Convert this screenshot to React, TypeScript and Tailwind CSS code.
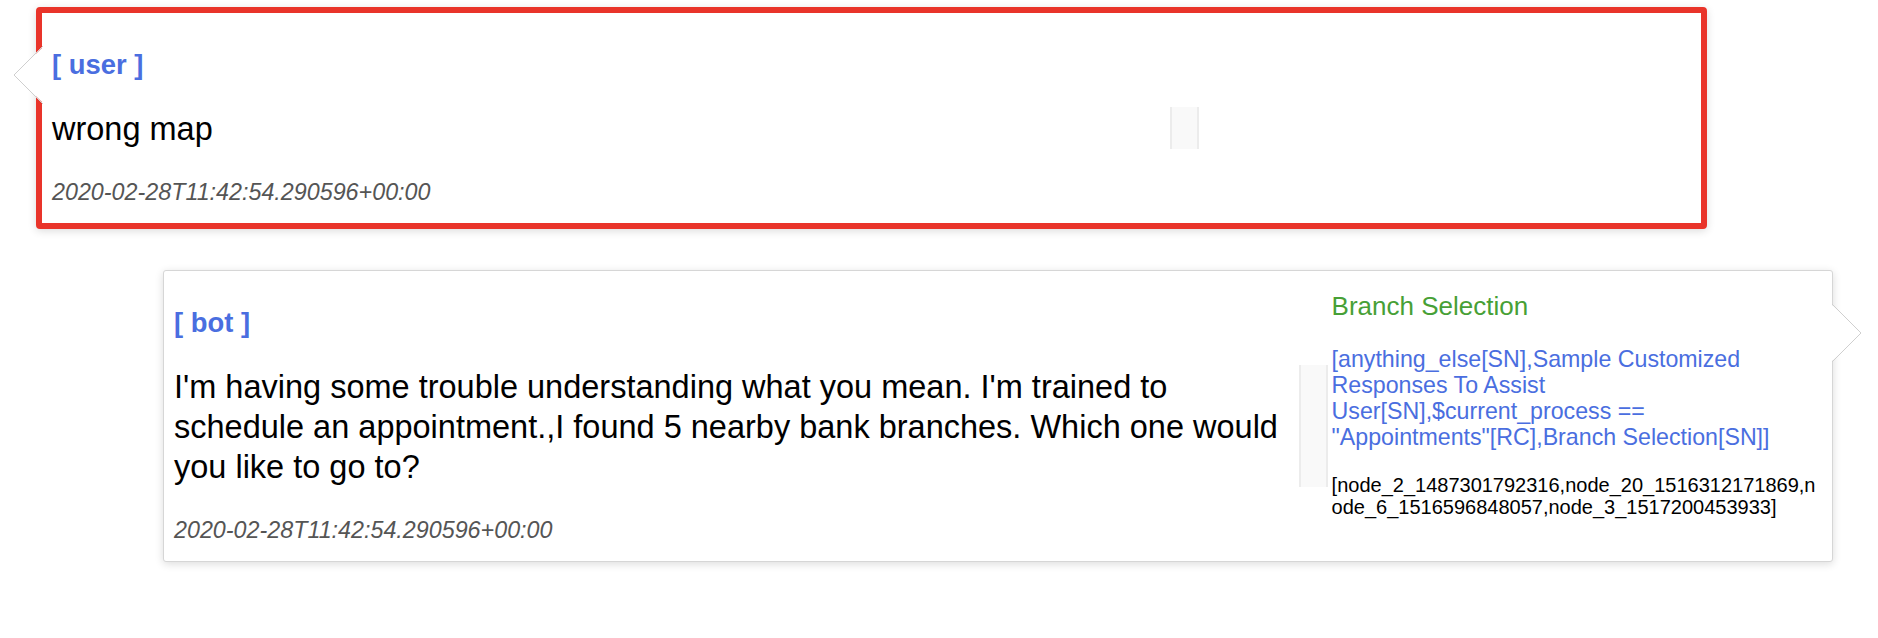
import React from "react";

function LeftArrow() {
  return (
    <svg
      className="absolute left-[-29px] top-[33px]"
      width="31"
      height="58"
      viewBox="0 0 31 58"
    >
      <polygon points="31,0 1,29 31,58" fill="#ffffff" />
      <polyline points="30,0 1,29 30,58" fill="none" stroke="#cfcfcf" strokeWidth="1" />
    </svg>
  );
}

function RightArrow() {
  return (
    <svg
      className="absolute right-[-30px] top-[33px]"
      width="31"
      height="58"
      viewBox="0 0 31 58"
    >
      <polygon points="0,0 30,29 0,58" fill="#ffffff" />
      <polyline points="1,0 30,29 1,58" fill="none" stroke="#cfcfcf" strokeWidth="1" />
    </svg>
  );
}

function ScrollTrack() {
  return <div className="w-[29px] self-stretch bg-[#f9f9f9] border-x-2 border-[#ececec]" />;
}

type CardProps = {
  who: string;
  text: string;
  time: string;
  right?: React.ReactNode;
  variant: "user" | "bot";
};

function Card({ who, text, time, right, variant }: CardProps) {
  const frame =
    variant === "user"
      ? "ml-[36px] w-[1671px] border-[6px] border-[#e9342a] rounded-[4px]"
      : "ml-[163px] mt-[41px] w-[1670px] border border-[#d6d6d6] rounded-[3px]";
  return (
    <div
      className={`relative bg-white shadow-[0_2px_8px_rgba(0,0,0,0.14)] ${frame} px-[10px] pb-[18px] flex`}
    >
      {variant === "user" ? <LeftArrow /> : <RightArrow />}
      <div className="w-[70%] pt-[36px] flex flex-col">
        <div className="text-[27.4px] leading-[32px] font-bold text-[#4a6ee0]">[ {who} ]</div>
        <div className="mt-[26px] flex">
          <div className="flex-1 pt-[2px] text-[32.5px] leading-[40px] text-black pr-[4px]">{text}</div>
          <ScrollTrack />
        </div>
        <div className="mt-[30px] text-[23.3px] leading-[26px] italic text-[#555555]">{time}</div>
      </div>
      <div className="flex-1 pl-[4px] pt-[20px]">{right}</div>
    </div>
  );
}

export default function App() {
  return (
    <div className="min-h-[638px] bg-white pt-[7px] font-['Liberation_Sans',Arial,sans-serif]">
      <Card
        variant="user"
        who="user"
        text="wrong map"
        time="2020-02-28T11:42:54.290596+00:00"
      />
      <Card
        variant="bot"
        who="bot"
        text="I'm having some trouble understanding what you mean. I'm trained to schedule an appointment.,I found 5 nearby bank branches. Which one would you like to go to?"
        time="2020-02-28T11:42:54.290596+00:00"
        right={
          <div className="flex flex-col">
            <div className="text-[26px] leading-[30px] text-[#47a036]">Branch Selection</div>
            <div className="mt-[25px] text-[23.2px] leading-[26px] text-[#4a6ee0]">
              [anything_else[SN],Sample Customized Responses To Assist User[SN],$current_process =={" "}
              <span className="whitespace-nowrap">"Appointments"[RC],Branch</span> Selection[SN]]
            </div>
            <div className="mt-[24px] text-[20px] leading-[22px] text-black break-all">
              [node_2_1487301792316,node_20_1516312171869,node_6_1516596848057,node_3_1517200453933]
            </div>
          </div>
        }
      />
    </div>
  );
}
